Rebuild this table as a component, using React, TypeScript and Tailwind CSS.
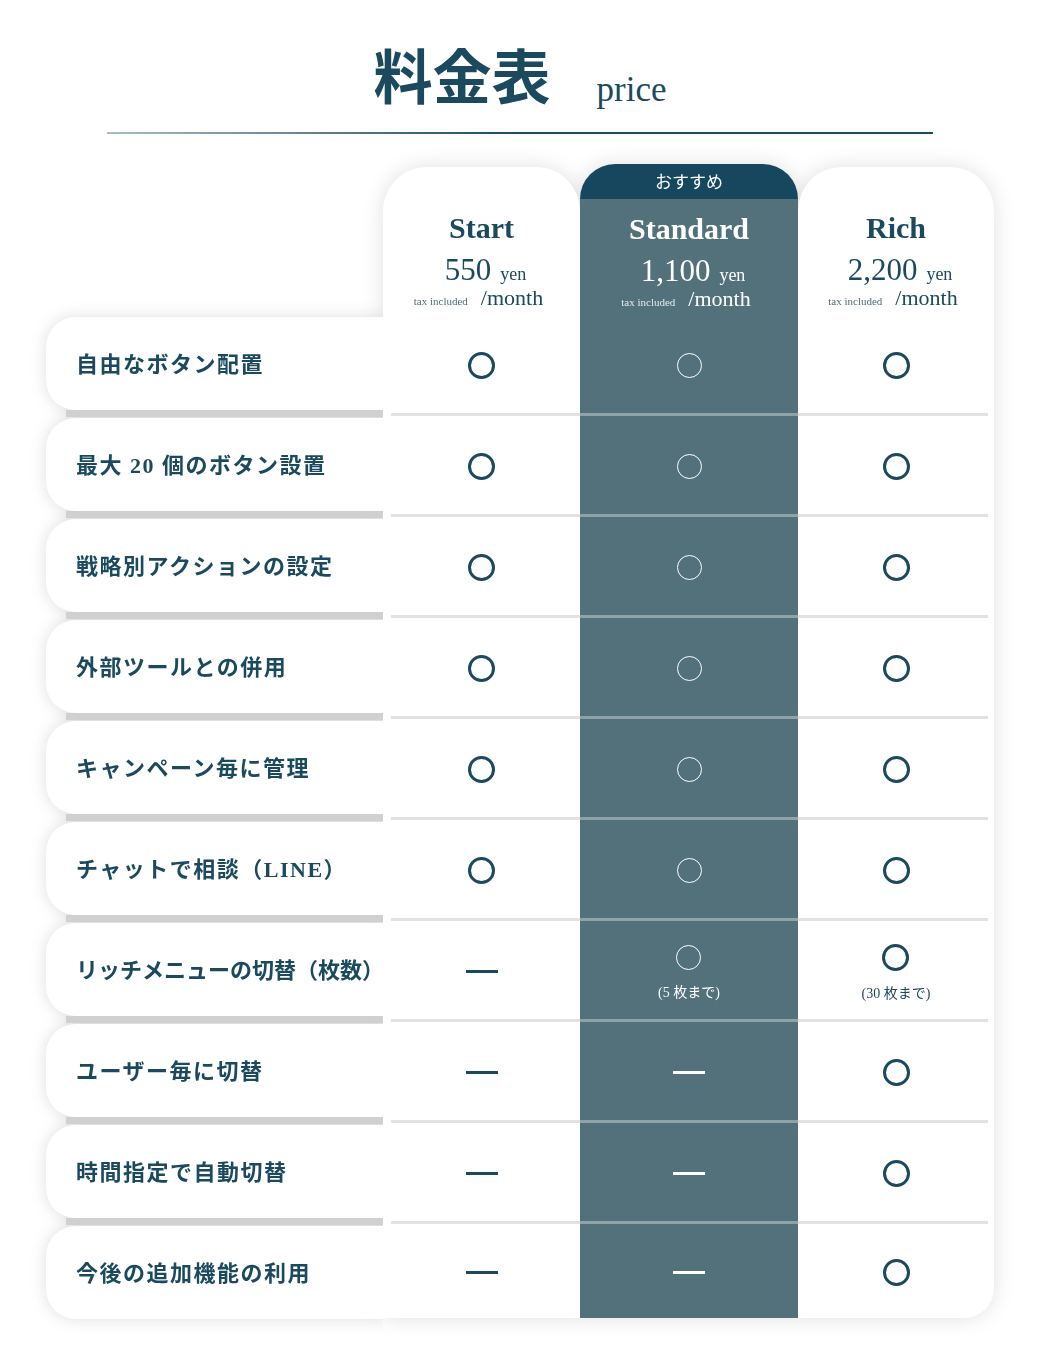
import React from "react"

type Mark = "o" | "-"
type Cell = { mark: Mark; note?: string }

type Row = {
  label: string
  cells: [Cell, Cell, Cell]
  tight?: boolean
}

const o: Cell = { mark: "o" }
const d: Cell = { mark: "-" }

const rows: Row[] = [
  { label: "自由なボタン配置", cells: [o, o, o] },
  { label: "最大 20 個のボタン設置", cells: [o, o, o] },
  { label: "戦略別アクションの設定", cells: [o, o, o] },
  { label: "外部ツールとの併用", cells: [o, o, o] },
  { label: "キャンペーン毎に管理", cells: [o, o, o] },
  { label: "チャットで相談（LINE）", cells: [o, o, o] },
  {
    label: "リッチメニューの切替（枚数）",
    cells: [d, { mark: "o", note: "(5 枚まで)" }, { mark: "o", note: "(30 枚まで)" }],
    tight: true,
  },
  { label: "ユーザー毎に切替", cells: [d, d, o] },
  { label: "時間指定で自動切替", cells: [d, d, o] },
  { label: "今後の追加機能の利用", cells: [d, d, o] },
]

const plans = [
  { name: "Start", price: "550" },
  { name: "Standard", price: "1,100" },
  { name: "Rich", price: "2,200" },
]

const font = '"Liberation Serif", "Noto Sans CJK JP", serif'

const PlanHead = ({ name, price, dark }: { name: string; price: string; dark?: boolean }) => (
  <div className={`flex flex-col items-center ${dark ? "text-white" : "text-[#1b4a5f]"}`}>
    <div className="text-[30px] font-bold leading-none">{name}</div>
    <div className="mt-[11px] flex items-baseline gap-[9px] pl-[8px]">
      <span className="text-[31px] leading-none">{price}</span>
      <span className="text-[18px] leading-none">yen</span>
    </div>
    <div className="mt-[2px] flex items-baseline gap-[13px] pr-[6px]">
      <span className={`text-[11px] leading-none ${dark ? "text-white/85" : "text-[#4d6b7a]"}`}>tax included</span>
      <span className="text-[22px] leading-none">/month</span>
    </div>
  </div>
)

const MarkView = ({ cell, dark }: { cell: Cell; dark?: boolean }) => {
  if (cell.mark === "-") {
    return <div className={`h-[3px] w-[32px] ${dark ? "bg-white" : "bg-[#1b4a5f]"}`} />
  }
  return (
    <div className="flex flex-col items-center">
      <div
        className={
          dark
            ? "h-[25px] w-[25px] rounded-full border-[1.5px] border-white"
            : "h-[27px] w-[27px] rounded-full border-[3px] border-[#1b4a5f]"
        }
      />
      {cell.note && (
        <div className={`mt-[16px] text-[14px] leading-none ${dark ? "text-white" : "text-[#1b4a5f]"}`}>
          {cell.note}
        </div>
      )}
    </div>
  )
}

const Column = ({ index, dark }: { index: number; dark?: boolean }) => (
  <>
    {rows.map((row, i) => {
      const last = i === rows.length - 1
      const cell = row.cells[index]
      return (
        <div key={row.label} className={`flex flex-col ${last ? "h-[92px]" : "h-[101px]"}`}>
          <div className={`flex h-[96px] items-center justify-center ${cell.note ? "pt-[2px]" : ""}`}>
            <MarkView cell={cell} dark={dark} />
          </div>
          {!last && (
            <div
              className={`h-[3px] ${
                dark
                  ? "bg-[#8fa2a7]"
                  : index === 0
                  ? "ml-[8px] bg-[#e2e2e2]"
                  : "mr-[6px] bg-[#e2e2e2]"
              }`}
            />
          )}
        </div>
      )
    })}
  </>
)

export default function App() {
  return (
    <div className="min-h-[1346px] bg-white" style={{ fontFamily: font }}>
      <div className="flex items-end justify-center gap-[46px] pt-[50px] text-[#1b4a5f]">
        <h1 className="text-[59px] font-bold leading-none">料金表</h1>
        <span className="mb-[2px] text-[35px] leading-none">price</span>
      </div>
      <div className="mx-auto mt-[23px] h-[2px] w-[826px] bg-gradient-to-r from-[#a9bcc5] via-[#1b4a5f] to-[#1b4a5f]" />

      <div className="mx-auto mt-[30px] flex w-[948px] items-start">
        {/* feature labels */}
        <div className="relative z-10 w-[337px] [clip-path:inset(-40px_0px_-40px_-40px)]">
          <div className="drop-shadow-[0_0_8px_rgba(0,0,0,0.13)]">
            <div className="h-[153px]" />
            {rows.map((row, i) => (
              <div key={row.label}>
                <div
                  className={`flex h-[93px] items-center rounded-l-[30px] bg-white pt-[2px] pl-[30px] text-[22px] font-bold whitespace-nowrap text-[#1b4a5f] ${
                    row.tight ? "tracking-[0px]" : "tracking-[1.5px]"
                  }`}
                >
                  {row.label}
                </div>
                {i < rows.length - 1 && <div className="mb-[1px] ml-[20px] h-[7px] bg-[#d0d0d0]" />}
              </div>
            ))}
          </div>
        </div>

        {/* plans */}
        <div className="flex w-[611px] drop-shadow-[0_0_10px_rgba(0,0,0,0.12)]">
          <div className="mt-[3px] w-[197px] rounded-t-[44px] bg-white">
            <div className="h-[150px] pt-[46px]">
              <PlanHead {...plans[0]} />
            </div>
            <Column index={0} />
          </div>

          <div className="w-[218px]">
            <div className="flex h-[35px] items-center justify-center rounded-t-[40px] bg-[#17475e] pt-[2px] text-[17px] text-white">
              おすすめ
            </div>
            <div className="bg-[#52717b]">
              <div className="h-[118px] pt-[15px]">
                <PlanHead {...plans[1]} dark />
              </div>
              <Column index={1} dark />
            </div>
          </div>

          <div className="mt-[3px] w-[196px] rounded-t-[44px] rounded-br-[30px] bg-white">
            <div className="h-[150px] pt-[46px]">
              <PlanHead {...plans[2]} />
            </div>
            <Column index={2} />
          </div>
        </div>
      </div>
    </div>
  )
}
